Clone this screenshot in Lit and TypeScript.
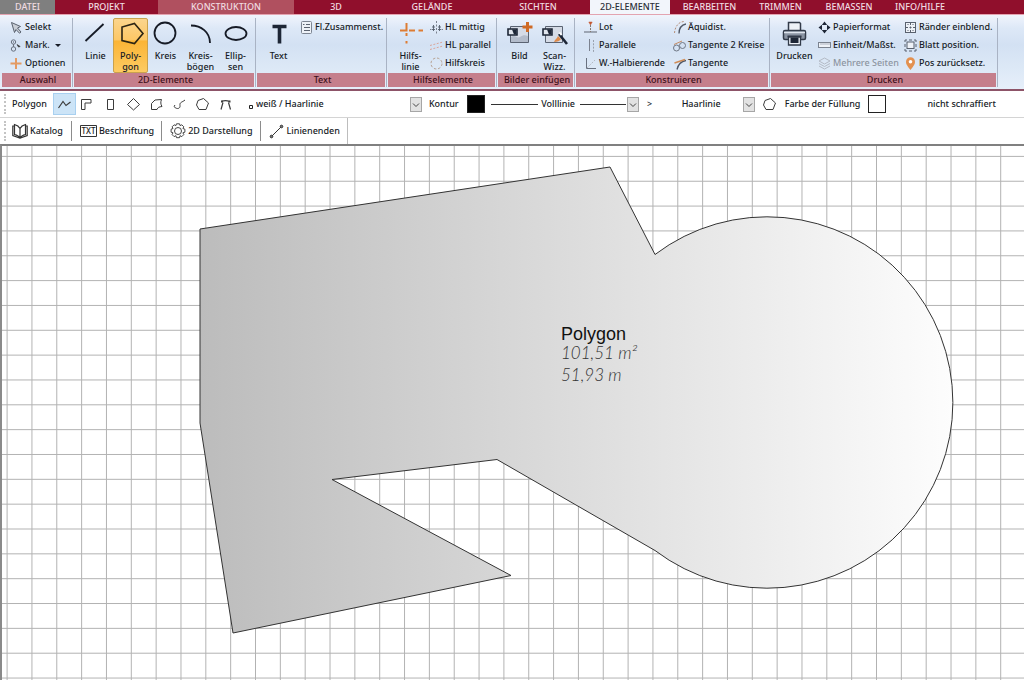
import { LitElement, html, svg, css, nothing, TemplateResult } from "lit";
import { customElement, property, state } from "lit/decorators.js";
import { classMap } from "lit/directives/class-map.js";

const ink = "#161b26";

const bigIcons: Record<string, TemplateResult> = {
  linie: svg`<path d="M3.5 22 21.5 5" stroke=${ink} stroke-width="1.8" fill="none"/>`,
  polygon: svg`<path d="M17.5 4.5 26 14.5 17.5 24.5 5 21.5V8z" stroke="#2b2413" stroke-width="1.6" fill="none"/>`,
  kreis: svg`<circle cx="13" cy="14" r="10.5" stroke=${ink} stroke-width="1.8" fill="none"/>`,
  bogen: svg`<path d="M4 6.5C14 6.5 23 13 23 24" stroke=${ink} stroke-width="1.8" fill="none"/>`,
  ellipse: svg`<ellipse cx="14" cy="14.5" rx="10.5" ry="6.5" stroke=${ink} stroke-width="1.8" fill="none"/>`,
  text: svg`<path d="M7.500 7.500h14M14.500 7v17.500" stroke="#1d2636" stroke-width="3.600" fill="none"/>`,
  hilfslinie: svg`<path d="M9.500 4v7.500H3M9.500 14v3M9.500 22v2.500M12 11.500h6M21.500 11.500h4.500" stroke="#dd7c33" stroke-width="2" fill="none"/>`,
  bild: svg`
    <path d="M4.500 7.500h18v16h-18z" fill="#d5dbe6" stroke="#5a6372"/>
    <path d="M5 18c4-3 6 2 9 0s5-2 8-1v6H5z" fill="#b3bccb"/>
    <path d="M2 10h9v6H2z" fill="#dfe4ec" stroke="#1d2636" stroke-width="1.600"/>
    <path d="M6 10.500h4.500v5H8z" fill="#1d2636"/>
    <path d="M21.500 3v10M16.500 8h10" stroke="#cf6a26" stroke-width="3"/>`,
  scan: svg`
    <path d="M4.500 7.500h17v16h-17z" fill="#d5dbe6" stroke="#5a6372"/>
    <path d="M2 10h9v6H2z" fill="#dfe4ec" stroke="#1d2636" stroke-width="1.600"/>
    <path d="M6 10.500h4.500v5H8z" fill="#1d2636"/>
    <path d="M13 23c1-3 3-3 4-6l3 3c-1 2-4 3-7 3z" fill="#dd8a4a"/>
    <path d="M18 15l8 10" stroke="#1d2636" stroke-width="2.600"/>
    <path d="M18.500 13.500l2 2.500" stroke="#fff" stroke-width="2"/>`,
  drucker: svg`
    <path d="M7.500 12V3.500h11l1 1V12" fill="#eef2f8" stroke="#323b49" stroke-width="1.500"/>
    <rect x="2.500" y="11.500" width="22" height="9" rx="1.500" fill="#8a94a3" stroke="#323b49" stroke-width="1.500"/>
    <path d="M3 13.500h21" stroke="#dfe5ee" stroke-width="1.500"/>
    <path d="M6.500 17.500h14" stroke="#323b49" stroke-width="2"/>
    <path d="M7.500 18h12v8h-12z" fill="#eef2f8" stroke="#323b49" stroke-width="1.300"/>
    <path d="M9.500 18.500h8v5.500h-8z" fill="#1d2636"/>`,
};

const smallIcons: Record<string, TemplateResult> = {
  selekt: svg`<path d="M1.500 1.500 10.500 5.500 7.500 7 11 11 9.500 12.200 6 8.500 4.500 11.500z" fill="#c9ced6" stroke="#59616e"/>`,
  mark: svg`<g fill="none" stroke="#69717f"><circle cx="3.500" cy="3" r="2.200"/><circle cx="3.500" cy="10" r="2.200"/><path d="M3.500 5v3"/></g><circle cx="3.500" cy="3" r=".7" fill="#69717f"/><path d="M7 5.500l3.200 2-1.700.6z" fill="#333" stroke="#333" stroke-width=".6"/>`,
  plus: svg`<path d="M6 1v11M.5 6.500h11" stroke="#e39a63" stroke-width="2"/>`,
  liste: svg`<rect x="1.500" y=".5" width="10" height="12" rx="1" fill="#eef2f8" stroke="#7d8592"/><path d="M6 3.500h4M4 6.500h6M4 9.500h6M3 3.500h1.500" stroke="#5b6370"/>`,
  hlmittig: svg`<path d="M6.500 0v13" stroke="#7b828f" stroke-dasharray="2 1.500"/><path d="M0 8.500h1.500M11.500 8.500h1.500" stroke="#7b828f"/><path d="M2 6h3M2 8.500h3M8 6h3M8 8.500h3M3.500 4v6M9.500 4v6" stroke="#555d6b" fill="none" stroke-width=".9"/>`,
  hlparallel: svg`<path d="M0 6.500 13 3M0 10.500 13 7" stroke="#dba59a" stroke-dasharray="2 1.500" fill="none"/>`,
  hlkreis: svg`<circle cx="6.500" cy="6.500" r="5.500" stroke="#b7a293" stroke-dasharray="2.500 1.800" fill="none"/>`,
  lot: svg`<path d="M0 11h13" stroke="#737b88" stroke-width="1.200"/><path d="M6.500 4v7" stroke="#85796f" stroke-dasharray="2 1"/><path d="M4.800 1h3.400L6.500 4z" fill="#c5562e" stroke="#c5562e" stroke-width=".5"/>`,
  parallele: svg`<path d="M5.500 0v12" stroke="#7b828f"/><path d="M9.500 1v12" stroke="#9aa1ad" stroke-dasharray="2 1.300"/>`,
  winkel: svg`<path d="M2.500 1v10.500H12" stroke="#69717f" fill="none"/><path d="M3 11 11 3" stroke="#b3b9c3" stroke-dasharray="2 1.300"/>`,
  aequidist: svg`<path d="M6 12.500C6 8 8.500 4 13 3" stroke="#4f5765" stroke-width="1.300" fill="none"/><path d="M1.500 12C2 6 5 1 11 .5" stroke="#b58f7a" stroke-dasharray="2 1.500" fill="none"/>`,
  tangente2: svg`<circle cx="3.500" cy="9" r="3" stroke="#6f7784" fill="none"/><circle cx="9.500" cy="6.500" r="3" stroke="#6f7784" fill="none"/><path d="M1 5.500 9 2" stroke="#c58a62"/>`,
  tangente: svg`<path d="M4 12.500C5 8 7 4.500 13 3.500" stroke="#4f5765" stroke-width="1.300" fill="none"/><path d="M1.500 6 12 2.500" stroke="#d08b55" stroke-width="1.400"/>`,
  papier: svg`<path d="M6.500 .5 9.200 4H3.800zM6.500 12.500 3.800 9h5.400zM.5 6.500 4 3.800v5.400zM12.500 6.500 9 9.200V3.800z" fill="#1d2636"/><path d="M6.500 5 8 6.500 6.500 8 5 6.500z" fill="#e6edf8"/>`,
  lineal: svg`<rect x=".5" y="3.500" width="12" height="5" fill="#eef2f8" stroke="#7b8390"/><path d="M3 4v2M5 4v2M7 4v2M9 4v2M11 4v2" stroke="#9aa1ad" stroke-width=".8"/>`,
  seiten: svg`<g fill="none" stroke="#b4bbc6"><path d="M6.500 1 12 4 6.500 7 1 4z"/><path d="M1 6.500 6.500 9.500 12 6.500M1 9 6.500 12 12 9"/></g>`,
  raender: svg`<rect x="1.500" y="1.500" width="10" height="10" fill="#eef2f8" stroke="#59616e"/><path d="M2 6.500h9M6.500 2v9" stroke="#59616e" stroke-dasharray="2 1.500"/><path d="M3.500 3.500h1M8.500 3.500h1M3.500 9.500h1M8.500 9.500h1" stroke="#59616e"/>`,
  blatt: svg`<rect x="3" y="3" width="7" height="6.500" fill="#eef2f8" stroke="#59616e"/><path d="M1 3V1h2M5 1h3M10 1h2v2M12 5v3M12 10v2h-2M8 12H5M3 12H1v-2M1 8V5" stroke="#59616e" fill="none"/>`,
  pin: svg`<path d="M6.500 13C3 8.500 2 7 2 4.700a4.500 4.500 0 0 1 9 0C11 7 10 8.500 6.500 13z" fill="#e39150"/><circle cx="6.500" cy="4.700" r="1.800" fill="#fff"/>`,
};

const shapeIcons: Record<string, TemplateResult> = {
  "Freier Polygonzug": svg`<path d="M1.500 11 6 4.500 9 8.500 13.500 5" stroke-width="1.200"/>`,
  "Winkel": svg`<path d="M1.500 12.500V2.500h9.500v3.500H5v6.500z"/>`,
  "Rechteck": svg`<path d="M4.500 2.500h6v10h-6z"/>`,
  "Raute": svg`<path d="M7.500 1.500 13.500 7.500 7.500 13 1.500 7.500z"/>`,
  "Gemischt": svg`<path d="M2.500 12.500V6.500L6 3 12.500 2.500C11.500 5 11.500 7 13 9.500 10 10 9 10 8 12.500z"/>`,
  "Kurve": svg`<path d="M2 9.500 3 8M2 9.500C5 13 8.500 11.500 8 8.500 7.500 5 10 5.500 13 3"/>`,
  "Vieleck": svg`<path d="M8.500 1.500 13.500 6 11 12.500 4 12.500 1.500 8 3 3.500z"/>`,
  "Trapez": svg`<path d="M3 12.500 5 5.500M3.500 4.500C6 3.500 9 3.500 11.500 4.500M10.500 5.500 12.500 12.500" stroke-width="1.200"/><path d="M3 3.500h2v2H3zM10.500 3.500h2v2h-2z" fill="#3c3c3c" stroke="none"/>`,
};

type Item = { icon: string; label: string; off?: boolean; drop?: boolean };
type Group = { name: string; key: string; big: { icon: string; label: string[]; on?: boolean }[]; cols: Item[][] };

const groups: Group[] = [
  { name: "Auswahl", key: "auswahl", big: [], cols: [[
    { icon: "selekt", label: "Selekt" }, { icon: "mark", label: "Mark.", drop: true }, { icon: "plus", label: "Optionen" }]] },
  { name: "2D-Elemente", key: "elemente", big: [
    { icon: "linie", label: ["Linie"] }, { icon: "polygon", label: ["Poly-", "gon"], on: true }, { icon: "kreis", label: ["Kreis"] },
    { icon: "bogen", label: ["Kreis-", "bögen"] }, { icon: "ellipse", label: ["Ellip-", "sen"] }], cols: [] },
  { name: "Text", key: "text", big: [{ icon: "text", label: ["Text"] }], cols: [[{ icon: "liste", label: "Fl.Zusammenst." }]] },
  { name: "Hilfselemente", key: "hilfs", big: [{ icon: "hilfslinie", label: ["Hilfs-", "linie"] }], cols: [[
    { icon: "hlmittig", label: "HL mittig" }, { icon: "hlparallel", label: "HL parallel" }, { icon: "hlkreis", label: "Hilfskreis" }]] },
  { name: "Bilder einfügen", key: "bilder", big: [{ icon: "bild", label: ["Bild"] }, { icon: "scan", label: ["Scan-", "Wizz."] }], cols: [] },
  { name: "Konstruieren", key: "konstr", big: [], cols: [
    [{ icon: "lot", label: "Lot" }, { icon: "parallele", label: "Parallele" }, { icon: "winkel", label: "W.-Halbierende" }],
    [{ icon: "aequidist", label: "Äquidist." }, { icon: "tangente2", label: "Tangente 2 Kreise" }, { icon: "tangente", label: "Tangente" }]] },
  { name: "Drucken", key: "drucken", big: [{ icon: "drucker", label: ["Drucken"] }], cols: [
    [{ icon: "papier", label: "Papierformat" }, { icon: "lineal", label: "Einheit/Maßst." }, { icon: "seiten", label: "Mehrere Seiten", off: true }],
    [{ icon: "raender", label: "Ränder einblend." }, { icon: "blatt", label: "Blatt position." }, { icon: "pin", label: "Pos zurücksetz." }]] },
];

const base = css`
  * { box-sizing: border-box; }
  button, select, input {
    font: inherit; color: inherit; margin: 0; padding: 0; border: 0; background: none; border-radius: 0;
  }
  svg { display: block; flex: none; }
`;

@customElement("ribbon-group")
class RibbonGroup extends LitElement {
  @property({ attribute: false }) data!: Group;

  static styles = [base, css`
    :host { display: block; padding: 3px 1px 2px 0; }
    .frame { display: flex; flex-direction: column; height: 100%; border-right: 1px solid #a9b3c4; padding-right: 1px; }
    .body { display: flex; flex: 1; padding-left: 4px; }
    .body.drucken { padding-left: 0; }
    .body.hilfs { padding-left: 5px; }
    .big {
      width: 35px; height: 55px; display: flex; flex-direction: column; align-items: center;
      border: 1px solid transparent; border-radius: 2px; line-height: 11px; white-space: nowrap;
    }
    .big span { display: block; }
    .big svg { margin-bottom: 3px; }
    .drucken .big { width: 47px; }
    .big.on {
      border-color: #c9a24e;
      background: linear-gradient(#fbd58d 0, #fdc765 40%, #fbb435 41%, #fdcb62 100%);
    }
    .col { width: 89px; }
    .auswahl .col, .text .col { margin-left: 4px; width: auto; }
    .hilfs .col { margin-left: 2px; width: auto; }
    .konstr .col:first-child { margin-left: 4px; }
    .drucken .col { width: 86px; }
    .small { display: flex; align-items: center; gap: 2px; height: 18px; white-space: nowrap; }
    .small[disabled] { color: #8d95a1; }
    .caret { margin-left: 3px; border: 3px solid transparent; border-top-color: #161b26; border-bottom: 0; }
    .name {
      height: 14px; line-height: 14px; padding-left: 3px; text-align: center;
      background: #c57f8c; color: #3d1019; white-space: nowrap;
    }
  `];

  render() {
    const g = this.data;
    return html`<div class="frame">
      <div class="body ${g.key}">
        ${g.big.map(b => html`<button class=${classMap({ big: true, on: !!b.on })}>
          <svg width="28" height="28" viewBox="0 0 28 28" aria-hidden="true">${bigIcons[b.icon]}</svg>
          ${b.label.map(l => html`<span>${l}</span>`)}
        </button>`)}
        ${g.cols.map(c => html`<div class="col">${c.map(i => html`<button class="small" ?disabled=${!!i.off}>
          <svg width="13" height="13" viewBox="0 0 13 13" aria-hidden="true">${smallIcons[i.icon]}</svg>
          <span>${i.label}</span>${i.drop ? html`<i class="caret"></i>` : nothing}
        </button>`)}</div>`)}
      </div>
      <div class="name">${g.name}</div>
    </div>`;
  }
}

@customElement("app-root")
class AppRoot extends LitElement {
  @state() private shape = "Freier Polygonzug";

  static styles = [base, css`
    :host {
      display: flex; flex-direction: column; min-height: 100vh; overflow: hidden; background: #fff;
      font: 500 9px/12px "Noto Sans", "Open Sans", sans-serif; color: #161b26;
    }
    .tabs {
      display: grid; grid-template-columns: 55px 103px 136px 84px 108px 104px 80px 79px 63px 74px 68px;
      height: 14px; background: #900f2c;
    }
    .tab { color: #f0dce1; line-height: 14px; text-align: center; text-decoration: none; white-space: nowrap; }
    .file { background: #7f7f7f; }
    .soft { background: #b0505f; }
    .active { background: #f2f5fb; color: #2b2f38; }
    .ribbon {
      display: grid; grid-template-columns: 72px 183px 131px 110px 78px 195px 228px;
      height: 77px; padding-left: 2px;
      border-top: 1px solid #e3a3b0; border-bottom: 2px solid #8d5468;
      background: linear-gradient(#f0f4fc 0, #dde8f7 18%, #d3e1f3 40%, #dce8f6 70%, #e6effa 100%);
    }
    .bar { display: flex; align-items: center; height: 26px; white-space: nowrap; padding-left: 4px; }
    .props { height: 27px; border-bottom: 1px solid #d4d4d4; }
    .grip { width: 0; height: 20px; border-left: 2px dotted #c4c4c4; margin-right: 6px; }
    .shapes { display: flex; margin-left: 6px; }
    .shape { width: 23px; height: 22px; display: grid; place-items: center; }
    .shape.on { background: #cce4f7; outline: 1px solid #a8d0f0; outline-offset: -1px; }
    .shape svg, .poly { fill: none; stroke: #3c3c3c; }
    .drop { display: grid; align-items: center; }
    .drop select, .drop .arrow { grid-area: 1 / 1; }
    .drop select { appearance: none; width: 100%; height: 16px; outline-offset: 1px; }
    .arrow {
      justify-self: end; pointer-events: none; fill: #e2e2e2; stroke: #a6a6a6;
    }
    .arrow path { fill: none; stroke: #444; }
    .pen { margin: 6px 3px 0 12px; }
    .haar { width: 166px; }
    .kontur { margin-left: 7px; }
    .swatch { appearance: none; width: 18px; height: 18px; margin-left: 8px; border: 1px solid #222; }
    .swatch::-webkit-color-swatch-wrapper { padding: 0; }
    .swatch::-webkit-color-swatch { border: 0; border-radius: 0; }
    .voll { width: 148px; margin-left: 6px; }
    .voll select {
      padding-right: 13px; text-align-last: center;
      background:
        linear-gradient(#333, #333) 0 50% / 47px 1px no-repeat,
        linear-gradient(#333, #333) calc(100% - 13px) 50% / 46px 1px no-repeat;
    }
    .more { margin-left: 7px; width: 8px; }
    .breite { width: 80px; margin-left: 21px; }
    .breite select { padding-left: 7px; }
    .poly { margin: 0 8px 0 7px; }
    .hatch { margin-left: 41px; }
    .subs { display: flex; align-items: center; border-right: 1px solid #bdbdbd; height: 26px; }
    .sub { display: flex; align-items: center; gap: 2px; padding: 0 7px 0 8px; border-left: 1px solid #8c8c8c; height: 20px; }
    .sub:first-child { border-left: 0; padding-left: 0; padding-right: 8px; }
    .sub svg { fill: none; stroke: #333; }
    .sub .txt { fill: #222; stroke: none; }
    .canvas { flex: 1; display: flex; border-top: 2px solid #808080; border-left: 2px solid #8a8a8a; background: #fff; }
    .plan { flex: 1 1 100%; width: 100%; min-width: 0; min-height: 440px; }
    .title { font: 18px "Liberation Sans", Arial, sans-serif; fill: #111; }
    .measure { font: italic 300 17px Lato, sans-serif; fill: #333; }
  `];

  private arrow() {
    return html`<svg class="arrow" width="12" height="15" viewBox="0 0 12 15" aria-hidden="true">
      <rect x=".5" y=".5" width="11" height="14"/><path d="M3 6.500 6 9.500 9 6.500"/></svg>`;
  }

  render() {
    const tabs = ["DATEI", "PROJEKT", "KONSTRUKTION", "3D", "GELÄNDE", "SICHTEN", "2D-ELEMENTE", "BEARBEITEN", "TRIMMEN", "BEMASSEN", "INFO/HILFE"];
    return html`
      <nav class="tabs">
        ${tabs.map((t, i) => html`<a href="#" class=${classMap({ tab: true, file: i === 0, soft: i === 2, active: i === 6 })}>${t}</a>`)}
      </nav>
      <div class="ribbon">${groups.map(g => html`<ribbon-group .data=${g}></ribbon-group>`)}</div>

      <div class="bar props">
        <i class="grip"></i>
        <span>Polygon</span>
        <div class="shapes">
          ${Object.entries(shapeIcons).map(([name, icon]) => html`
            <button class=${classMap({ shape: true, on: this.shape === name })} aria-label=${name} @click=${() => (this.shape = name)}>
              <svg width="15" height="15" viewBox="0 0 15 15">${icon}</svg>
            </button>`)}
        </div>
        <svg class="pen" width="4" height="4" viewBox="0 0 4 4"><path d="M.5 .5h3v3h-3z" fill="#fff" stroke="#222"/></svg>
        <div class="drop haar"><select aria-label="Stift"><option>weiß / Haarlinie</option></select>${this.arrow()}</div>
        <label class="kontur" for="kontur">Kontur</label>
        <input class="swatch" id="kontur" type="color" value="#000000">
        <div class="drop voll"><select aria-label="Linienart"><option>Volllinie</option></select>${this.arrow()}</div>
        <button class="more">&gt;</button>
        <div class="drop breite"><select aria-label="Linienbreite"><option>Haarlinie</option></select>${this.arrow()}</div>
        <svg class="poly" width="15" height="15" viewBox="0 0 15 15"><path d="M8.500 1.500 13.500 6 11 12.500 4 12.500 1.500 8 3 3.500z"/></svg>
        <label for="fuellung">Farbe der Füllung</label>
        <input class="swatch" id="fuellung" type="color" value="#ffffff">
        <button class="hatch">nicht schraffiert</button>
      </div>

      <div class="bar">
        <i class="grip"></i>
        <div class="subs">
          <button class="sub"><svg width="16" height="16" viewBox="0 0 16 16" stroke-width="1.200"><path d="M8 5.500C7 3.500 4.500 2 2.500 1.500V3M8 5.500C9 3.500 11.500 2 13.500 1.500V3M8 5.500V15M.8 3h1.700v8.500C5 12 7 13 8 15 9 13 11 12 13.500 11.500V3h1.700v9.500L8 15 .8 12.500z"/></svg>Katalog</button>
          <button class="sub"><svg width="17" height="12" viewBox="0 0 17 12"><path d="M.5 .5h16v11H.5z"/><text class="txt" x="8.500" y="9" text-anchor="middle" font-size="8">TXT</text></svg>Beschriftung</button>
          <button class="sub"><svg width="16" height="16" viewBox="0 0 16 16" stroke-width=".9"><circle cx="8" cy="8" r="3.500"/><path d="M6.500 .8h3l.5 1.800 1.800-.8 2 2-.9 1.700 2 .7v3l-2 .6.9 1.800-2 2-1.800-.9-.5 2h-3l-.6-2-1.800.9-2-2 .9-1.800-1.900-.6v-3l1.900-.7-.9-1.700 2-2 1.800.8z"/></svg>2D Darstellung</button>
          <button class="sub"><svg width="16" height="15" viewBox="0 0 16 15"><path d="M2.500 12.500 12.500 2.500"/><circle cx="2.500" cy="12.500" r="1.300" fill="#777"/><circle cx="12.500" cy="2.500" r="1.300" fill="#777"/></svg>Linienenden</button>
        </div>
      </div>

      <main class="canvas">
        <svg class="plan" role="img" aria-label="Polygon">
          <defs>
            <pattern id="grid" x="4.600" y="9.900" width="24.840" height="24.840" patternUnits="userSpaceOnUse">
              <path d="M.5 0V24.840M0 .5H24.840" stroke="#b2b2b2" fill="none"/>
            </pattern>
            <linearGradient id="fill"><stop offset="0" stop-color="#bcbcbc"/><stop offset="1" stop-color="#fdfdfd"/></linearGradient>
          </defs>
          <rect width="100%" height="100%" fill="url(#grid)"/>
          <path d="M198 83 608 21 653 108.500A185.700 185.700 0 1 1 653 404.500L495 313.500 330 333.500 509 429.500 231 487 198 277z"
            fill="url(#fill)" stroke="#333"/>
          <text class="title" x="559" y="194">Polygon</text>
          <text class="measure" x="559" y="213">101,51 m²</text>
          <text class="measure" x="559" y="235">51,93 m</text>
        </svg>
      </main>`;
  }
}
